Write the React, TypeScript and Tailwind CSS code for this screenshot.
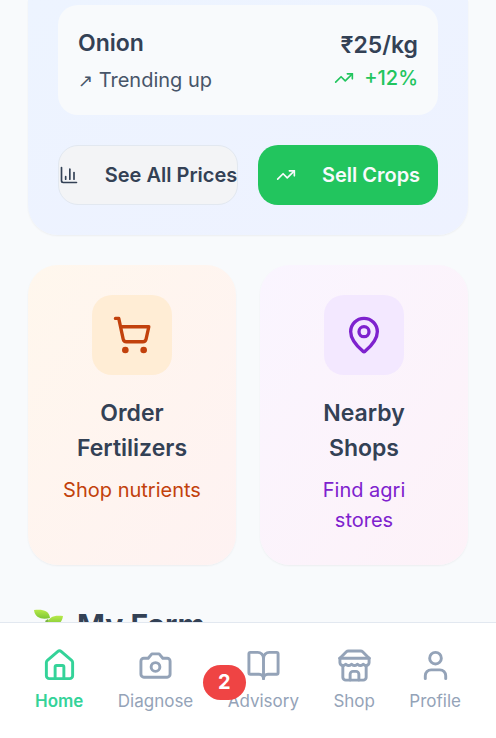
import {
  BookOpen,
  ChartColumn,
  House,
  MapPin,
  ShoppingCart,
  TrendingUp,
  User,
} from "lucide-react";
import type { ReactNode } from "react";

type Tab = { label: string; icon: ReactNode; badge?: number };

function LineIcon({ children }: { children: ReactNode }) {
  return (
    <svg
      width="35"
      height="35"
      viewBox="0 0 24 24"
      fill="none"
      stroke="currentColor"
      strokeWidth="2"
      strokeLinecap="round"
      strokeLinejoin="round"
      aria-hidden="true"
    >
      {children}
    </svg>
  );
}

function CameraIcon() {
  return (
    <LineIcon>
      <path d="M14.5 4h-5L7 7H4a2 2 0 0 0-2 2v9a2 2 0 0 0 2 2h16a2 2 0 0 0 2-2V9a2 2 0 0 0-2-2h-3l-2.5-3z" />
      <circle cx="12" cy="13" r="3" />
    </LineIcon>
  );
}

function StoreIcon() {
  return (
    <LineIcon>
      <path d="m2 7 4.41-4.41A2 2 0 0 1 7.83 2h8.34a2 2 0 0 1 1.42.59L22 7" />
      <path d="M4 12v8a2 2 0 0 0 2 2h12a2 2 0 0 0 2-2v-8" />
      <path d="M15 22v-4a2 2 0 0 0-2-2h-2a2 2 0 0 0-2 2v4" />
      <path d="M2 7h20" />
      <path d="M22 7v3a2 2 0 0 1-2 2a2.7 2.7 0 0 1-1.59-.63.7.7 0 0 0-.82 0A2.7 2.7 0 0 1 16 12a2.7 2.7 0 0 1-1.59-.63.7.7 0 0 0-.82 0A2.7 2.7 0 0 1 12 12a2.7 2.7 0 0 1-1.59-.63.7.7 0 0 0-.82 0A2.7 2.7 0 0 1 8 12a2.7 2.7 0 0 1-1.59-.63.7.7 0 0 0-.82 0A2.7 2.7 0 0 1 4 12a2 2 0 0 1-2-2V7" />
    </LineIcon>
  );
}

function SproutIcon() {
  return (
    <svg width="40" height="40" viewBox="0 0 40 40" aria-hidden="true">
      <defs>
        <linearGradient id="leaf" x1="0" y1="0" x2="0" y2="1">
          <stop offset="0" stopColor="#b7ea4a" />
          <stop offset="1" stopColor="#7cc534" />
        </linearGradient>
      </defs>
      <path d="M20 34c1-8 0-14-3-18l3-2c3 5 4 12 3 20z" fill="#7cb342" />
      <path d="M6 5c8-1 15 0 16 8-8 2-15 0-16-8z" fill="url(#leaf)" />
      <path d="M35 11c-8-1-15 0-16 9 8 3 15-1 16-9z" fill="url(#leaf)" />
    </svg>
  );
}

const tabs: Tab[] = [
  { label: "Home", icon: <House size={35} /> },
  { label: "Diagnose", icon: <CameraIcon /> },
  { label: "Advisory", icon: <BookOpen size={35} />, badge: 2 },
  { label: "Shop", icon: <StoreIcon /> },
  { label: "Profile", icon: <User size={35} /> },
];

function PricesCard() {
  return (
    <section className="rounded-b-[30px] bg-linear-to-br from-[#edf4ff] to-[#eef2ff] px-[30px] pt-[5px] pb-[30px] shadow-xs">
      <div className="flex items-center justify-between rounded-[20px] bg-[#f8fafc] p-5">
        <div>
          <h3 className="text-[23px] leading-[37px] font-semibold">Onion</h3>
          <p className="mt-[3px] text-[20px] leading-[30px] text-[#475569]">
            <span className="font-['DejaVu_Sans',sans-serif] text-[18px] leading-none">↗</span> Trending up
          </p>
        </div>
        <div className="text-right">
          <p className="text-[23px] leading-[35px] font-semibold">₹25/kg</p>
          <p className="flex items-center justify-end gap-[10px] text-[20px] leading-[30px] font-medium text-[#22c55e]">
            <TrendingUp size={20} />
            +12%
          </p>
        </div>
      </div>
      <div className="mt-[30px] grid grid-cols-2 gap-5 text-[20px] font-semibold whitespace-nowrap">
        <button
          type="button"
          className="flex h-[60px] min-w-0 items-center justify-center gap-[26px] rounded-[20px] border border-[#e2e8f0] bg-[#f3f4f6]"
        >
          <ChartColumn size={20} className="shrink-0" />
          See All Prices
        </button>
        <button
          type="button"
          className="flex h-[60px] min-w-0 items-center justify-center gap-[26px] rounded-[20px] bg-[#22c55e] text-[#f8fafc]"
        >
          <TrendingUp size={20} className="shrink-0" />
          Sell Crops
        </button>
      </div>
    </section>
  );
}

function QuickActions() {
  return (
    <div className="mt-[30px] grid grid-cols-2 gap-6 text-center">
      <a
        href="#fertilizers"
        className="flex flex-col items-center rounded-[30px] bg-linear-to-br from-[#fff7ed] to-[#fef2f2] p-[30px] shadow-xs"
      >
        <span className="flex size-20 items-center justify-center rounded-[20px] bg-[#ffedd5] text-[#c2410c]">
          <ShoppingCart size={40} />
        </span>
        <h3 className="mt-[21px] text-[23px] leading-[35px] font-semibold">Order Fertilizers</h3>
        <p className="mt-[9px] text-[20px] leading-[30px] whitespace-nowrap text-[#c2410c]">Shop nutrients</p>
      </a>
      <a
        href="#shops"
        className="flex flex-col items-center rounded-[30px] bg-linear-to-br from-[#faf5ff] to-[#fdf2f8] p-[30px] shadow-xs"
      >
        <span className="flex size-20 items-center justify-center rounded-[20px] bg-[#f3e8ff] text-[#7e22ce]">
          <MapPin size={40} />
        </span>
        <h3 className="mt-[21px] px-5 text-[23px] leading-[35px] font-semibold">Nearby Shops</h3>
        <p className="mt-[9px] px-5 text-[20px] leading-[30px] text-[#7e22ce]">Find agri stores</p>
      </a>
    </div>
  );
}

function BottomNav() {
  return (
    <nav className="fixed inset-x-0 bottom-0 flex justify-between border-t border-[#e2e8f0] bg-white px-5 pt-[25px] pb-6">
      {tabs.map(({ label, icon, badge }, i) => (
        <button
          key={label}
          type="button"
          aria-current={i === 0 ? "page" : undefined}
          className={
            i === 0
              ? "relative flex flex-col items-center gap-[6px] px-[15px] text-[17px] leading-[25px] font-semibold text-[#34d399]"
              : "relative flex flex-col items-center gap-[6px] px-[15px] text-[17px] leading-[25px] text-[#94a3b8]"
          }
        >
          {icon}
          {label}
          {badge !== undefined && (
            <span className="absolute top-[17px] -left-[10px] flex h-[35px] w-[43px] items-center justify-center rounded-full bg-[#ef4444] text-[20px] font-bold text-white">
              {badge}
            </span>
          )}
        </button>
      ))}
    </nav>
  );
}

export default function App() {
  return (
    <div className="min-h-screen bg-[#f8fafc] font-['Inter',sans-serif] text-[#334155]">
      <main className="px-7">
        <PricesCard />
        <QuickActions />
        <h2 className="mt-10 flex gap-[9px] text-[30px] leading-[40px] font-bold">
          <SproutIcon />
          My Farm
        </h2>
      </main>
      <BottomNav />
    </div>
  );
}
